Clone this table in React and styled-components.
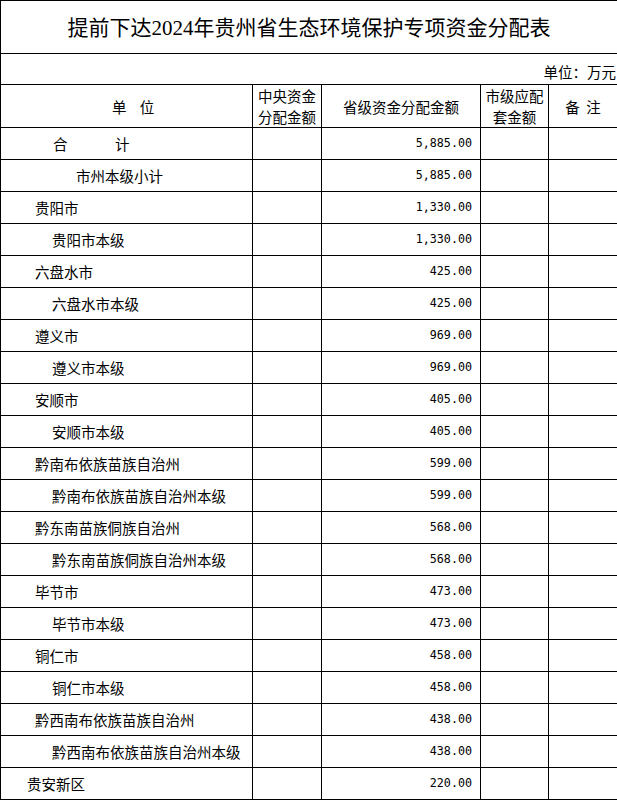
import styled, { createGlobalStyle } from 'styled-components'

const GlobalStyle = createGlobalStyle`
    html, body {
        margin: 0;
        padding: 0;
        background: #fff;
    }
    body {
        font-family: "Noto Sans CJK SC", "Noto Sans", sans-serif;
        color: #000;
    }
`;

const Table = styled.table`
    border-collapse: collapse;
    table-layout: fixed;
    width: 617px;
    font-size: 14.5px;
    line-height: 21px;
    color: #000;
`;

const Cell = styled.td`
    border: 1px solid #000;
    padding: 0;
    height: ${props => props.h || 31}px;
    text-align: ${props => props.align || 'left'};
    vertical-align: middle;
    white-space: nowrap;
    overflow: hidden;
`;

const TitleCell = styled(Cell)`
    font-family: "Liberation Serif", "Noto Sans CJK SC", serif;
    font-size: 21px;
    line-height: 26px;
    text-align: center;
    padding-top: 1px;
`;

const UnitCell = styled(Cell)`
    text-align: right;
    padding-top: 4px;
    padding-right: 1px;
`;

const HeadCell = styled(Cell)`
    text-align: center;
    white-space: normal;
    line-height: 21px;
`;

const Spread = styled.span`
    display: inline-block;
    width: ${props => props.w}px;
`;

const Label = styled.span`
    display: inline-block;
    padding-left: ${props => props.indent}px;
`;

const Amount = styled(Cell)`
    font-family: "DejaVu Sans Mono", "Liberation Mono", monospace;
    font-size: 11.7px;
    text-align: right;
    padding-right: 8px;
`;

const rows = [
    { name: '市州本级小计', indent: 75, amount: '5,885.00' },
    { name: '贵阳市', indent: 34, amount: '1,330.00' },
    { name: '贵阳市本级', indent: 51, amount: '1,330.00' },
    { name: '六盘水市', indent: 34, amount: '425.00' },
    { name: '六盘水市本级', indent: 51, amount: '425.00' },
    { name: '遵义市', indent: 34, amount: '969.00' },
    { name: '遵义市本级', indent: 51, amount: '969.00' },
    { name: '安顺市', indent: 34, amount: '405.00' },
    { name: '安顺市本级', indent: 51, amount: '405.00' },
    { name: '黔南布依族苗族自治州', indent: 34, amount: '599.00' },
    { name: '黔南布依族苗族自治州本级', indent: 51, amount: '599.00' },
    { name: '黔东南苗族侗族自治州', indent: 34, amount: '568.00' },
    { name: '黔东南苗族侗族自治州本级', indent: 51, amount: '568.00' },
    { name: '毕节市', indent: 34, amount: '473.00' },
    { name: '毕节市本级', indent: 51, amount: '473.00' },
    { name: '铜仁市', indent: 34, amount: '458.00' },
    { name: '铜仁市本级', indent: 51, amount: '458.00' },
    { name: '黔西南布依族苗族自治州', indent: 34, amount: '438.00' },
    { name: '黔西南布依族苗族自治州本级', indent: 51, amount: '438.00' },
    { name: '贵安新区', indent: 26, amount: '220.00' },
]

const App = () => {
    return (
        <>
            <GlobalStyle />
            <Table>
                <colgroup>
                    <col style={{ width: 252 }} />
                    <col style={{ width: 69 }} />
                    <col style={{ width: 159 }} />
                    <col style={{ width: 68 }} />
                    <col style={{ width: 69 }} />
                </colgroup>
                <tbody>
                    <tr>
                        <TitleCell colSpan={5} h={51}>提前下达2024年贵州省生态环境保护专项资金分配表</TitleCell>
                    </tr>
                    <tr>
                        <UnitCell colSpan={5} h={26}>单位：万元</UnitCell>
                    </tr>
                    <tr>
                        <HeadCell h={40}><Spread w={41}>单</Spread>位</HeadCell>
                        <HeadCell>中央资金<br />分配金额</HeadCell>
                        <HeadCell>省级资金分配金额</HeadCell>
                        <HeadCell>市级应配<br />套金额</HeadCell>
                        <HeadCell>备&nbsp;&nbsp;注</HeadCell>
                    </tr>
                    <tr>
                        <Cell><Label indent={52}><Spread w={62}>合</Spread>计</Label></Cell>
                        <Cell />
                        <Amount>5,885.00</Amount>
                        <Cell />
                        <Cell />
                    </tr>
                    {rows.map((row, i) => (
                        <tr key={i}>
                            <Cell><Label indent={row.indent}>{row.name}</Label></Cell>
                            <Cell />
                            <Amount>{row.amount}</Amount>
                            <Cell />
                            <Cell />
                        </tr>
                    ))}
                </tbody>
            </Table>
        </>
    )
}

export default App
